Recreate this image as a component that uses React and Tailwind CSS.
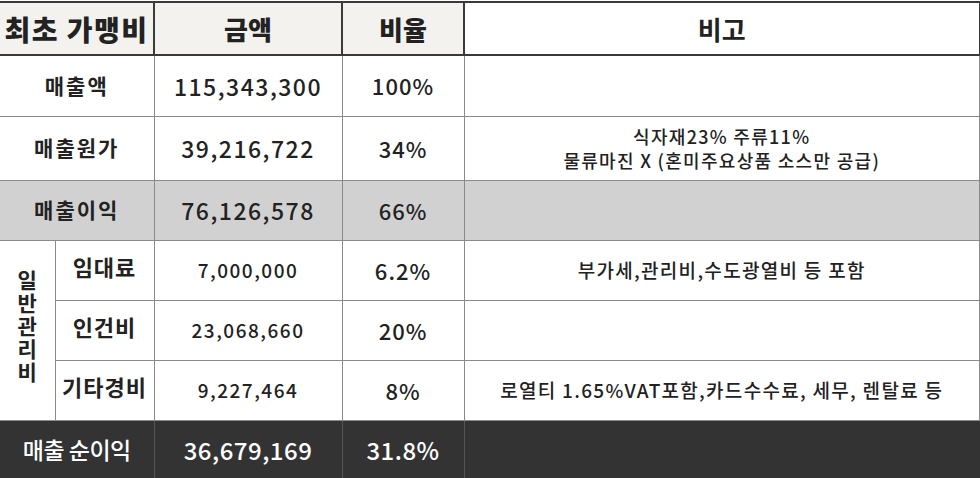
const font = { fontFamily: '"Noto Sans CJK KR", "Noto Sans", sans-serif' };

const rows = [
  { label: "매출액", amount: "115,343,300", ratio: "100%", note: "", h: "h-[61px]" },
  {
    label: "매출원가",
    amount: "39,216,722",
    ratio: "34%",
    note: ["식자재23% 주류11%", "물류마진 X (혼미주요상품 소스만 공급)"],
    h: "h-[64px]",
  },
  { label: "매출이익", amount: "76,126,578", ratio: "66%", note: "", h: "h-[60px]", gray: true },
];

const expenses = [
  { label: "임대료", amount: "7,000,000", ratio: "6.2%", note: "부가세,관리비,수도광열비 등 포함" },
  { label: "인건비", amount: "23,068,660", ratio: "20%", note: "" },
  { label: "기타경비", amount: "9,227,464", ratio: "8%", note: "로열티 1.65%VAT포함,카드수수료, 세무, 렌탈료 등" },
];

const cell = "border border-[#8a8a8a] text-center align-middle";

export default function App() {
  return (
    <div className="w-[980px] h-[478px] overflow-hidden bg-white text-[#222]" style={font}>
      <table className="table-fixed border-collapse w-[980px] mt-[1px]">
        <colgroup>
          <col className="w-[55px]" />
          <col className="w-[99px]" />
          <col className="w-[188px]" />
          <col className="w-[122px]" />
          <col className="w-[516px]" />
        </colgroup>
        <thead>
          <tr className="h-[53px]">
            <th colSpan={2} className="border-2 border-l-0 border-[#3a3a3a] bg-[#f4f2ee] text-[28px] font-black tracking-[1.5px] whitespace-nowrap">
              최초 가맹비
            </th>
            <th className="border-2 border-[#3a3a3a] bg-[#f4f2ee] text-[26px] font-black">금액</th>
            <th className="border-2 border-[#3a3a3a] bg-[#f4f2ee] text-[26px] font-black">비율</th>
            <th className="border-2 border-r-[3px] border-[#3a3a3a] bg-white text-[26px] font-bold">비고</th>
          </tr>
        </thead>
        <tbody>
          {rows.map((r) => (
            <tr key={r.label} className={`${r.h} ${r.gray ? "bg-[#d1d1d1]" : ""}`}>
              <td colSpan={2} className={`${cell} border-l-0 text-[21px] font-bold tracking-[2px]`}>
                {r.label}
              </td>
              <td className={`${cell} text-[23px] font-medium tracking-[1.5px]`}>{r.amount}</td>
              <td className={`${cell} text-[22px] font-medium tracking-[1px]`}>{r.ratio}</td>
              <td className={`${cell} border-r-2 text-[18px] font-medium tracking-[1.3px] leading-[24px]`}>
                {Array.isArray(r.note) ? r.note.map((n) => <div key={n}>{n}</div>) : r.note}
              </td>
            </tr>
          ))}
          {expenses.map((e, i) => (
            <tr key={e.label} className="h-[60px]">
              {i === 0 && (
                <td rowSpan={3} className={`${cell} border-l-0 text-[21px] font-bold`}>
                  <div className="flex justify-center pb-[6px]">
                    <div className="leading-[24px] tracking-[2px] [writing-mode:vertical-rl] [text-orientation:upright]">
                      일반관리비
                    </div>
                  </div>
                </td>
              )}
              <td className={`${cell} text-[22px] font-bold tracking-[1px] pb-[8px]`}>{e.label}</td>
              <td className={`${cell} text-[19px] font-medium tracking-[1.5px]`}>{e.amount}</td>
              <td className={`${cell} text-[22px] font-medium tracking-[1px]`}>{e.ratio}</td>
              <td className={`${cell} border-r-2 text-[19px] font-medium tracking-[1.3px]`}>{e.note}</td>
            </tr>
          ))}
          <tr className="h-[59px] bg-[#333333] text-white">
            <td colSpan={2} className="border border-l-0 border-[#555] text-center text-[23px] font-medium tracking-[-0.5px] whitespace-nowrap">
              매출 순이익
            </td>
            <td className="border border-[#555] text-center text-[24px] font-medium tracking-[0.5px]">36,679,169</td>
            <td className="border border-[#555] text-center text-[24px] font-medium tracking-[0.5px]">31.8%</td>
            <td className="border border-[#555]"></td>
          </tr>
        </tbody>
      </table>
    </div>
  );
}
